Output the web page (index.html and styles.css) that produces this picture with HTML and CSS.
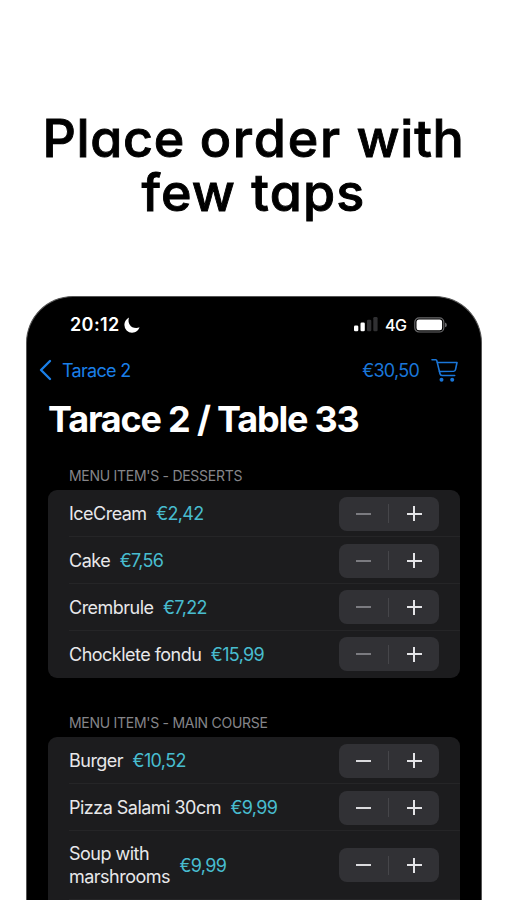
FILE: index.html
```html
<!DOCTYPE html>
<html lang="en">
<head>
<meta charset="utf-8">
<title>Place order with few taps</title>
<link rel="stylesheet" href="styles.css">
</head>
<body>
<h1 class="headline">Place <span class="wide">order</span> with<br><span class="second">few taps</span></h1>
<main class="phone">
  <div class="status">
    <span class="time">20:12</span>
    <svg class="moon" width="16" height="16" viewBox="0 0 16 16"><path d="M5 .4C3.400 1.300.4 3.700.4 8.100A7.600 7.600 0 0 0 8 15.700C12 15.700 14.700 13.300 15.500 10.300 14.600 10.800 13.300 11 12.200 11 6.500 11 3.200 5.800 5 .4Z" fill="#fff"/></svg>
    <svg class="signal" width="24" height="15" viewBox="0 0 24 15"><g fill="#fff"><rect x="0" y="8.500" width="4.300" height="5.800" rx="1.300"/><rect x="6.500" y="5.500" width="4.300" height="8.800" rx="1.300"/></g><g fill="#303032"><rect x="13" y="2.800" width="4.300" height="11.500" rx="1.300"/><rect x="19.300" y="0" width="4.300" height="14.300" rx="1.300"/></g></svg>
    <span class="network">4G</span>
    <svg class="battery" width="34" height="16" viewBox="0 0 34 16"><rect x=".8" y=".8" width="29" height="14.200" rx="4.300" fill="none" stroke="#69696b" stroke-width="1.200"/><rect x="2.500" y="2.500" width="25.600" height="10.800" rx="2.500" fill="#fff"/><path d="M31 5.500q1.900.8 1.900 2.400T31 10.300Z" fill="#69696b"/></svg>
  </div>
  <nav class="nav">
    <svg class="back" width="13" height="22" viewBox="0 0 13 22"><path d="M11 2 2 11l9 9" fill="none" stroke="#1a7fe8" stroke-width="2.400" stroke-linecap="round" stroke-linejoin="round"/></svg>
    <span class="back-label">Tarace 2</span>
    <span class="total">€30,50</span>
    <svg class="cart" width="28" height="25" viewBox="0 0 28 25"><g fill="none" stroke="#1a76d8" stroke-width="1.600" stroke-linecap="round" stroke-linejoin="round"><path d="M1 1.800h3.700q.9 0 1.100.9L9 15.800q.4 1.700 2 1.700h12.700"/><path d="M6.500 4.500H26l-1.500 7.200q-.3 1.500-1.800 1.600L8.500 13.500"/></g><circle cx="10.500" cy="21.800" r="2" fill="#1a76d8"/><circle cx="21.200" cy="21.800" r="2" fill="#1a76d8"/></svg>
  </nav>
  <h2 class="title">Tarace 2 / Table 33</h2>
  <section class="group">
    <h3 class="caption">MENU ITEM'S - DESSERTS</h3>
    <ul class="card">
      <li class="row"><span class="name">IceCream</span><span class="price">€2,42</span><span class="stepper"><i class="minus off"></i><i class="bar"></i><i class="plus"></i></span></li>
      <li class="row"><span class="name">Cake</span><span class="price">€7,56</span><span class="stepper"><i class="minus off"></i><i class="bar"></i><i class="plus"></i></span></li>
      <li class="row"><span class="name">Crembrule</span><span class="price">€7,22</span><span class="stepper"><i class="minus off"></i><i class="bar"></i><i class="plus"></i></span></li>
      <li class="row"><span class="name">Chocklete fondu</span><span class="price">€15,99</span><span class="stepper"><i class="minus off"></i><i class="bar"></i><i class="plus"></i></span></li>
    </ul>
  </section>
  <section class="group">
    <h3 class="caption">MENU ITEM'S - MAIN COURSE</h3>
    <ul class="card">
      <li class="row"><span class="name">Burger</span><span class="price">€10,52</span><span class="stepper"><i class="minus"></i><i class="bar"></i><i class="plus"></i></span></li>
      <li class="row"><span class="name">Pizza Salami 30cm</span><span class="price">€9,99</span><span class="stepper"><i class="minus"></i><i class="bar"></i><i class="plus"></i></span></li>
      <li class="row tall"><span class="name">Soup with<br>marshrooms</span><span class="price">€9,99</span><span class="stepper"><i class="minus"></i><i class="bar"></i><i class="plus"></i></span></li>
    </ul>
  </section>
</main>
</body>
</html>
```
FILE: styles.css
```css
* { box-sizing: border-box; }
body {
  margin: 0;
  height: 900px;
  overflow: hidden;
  background: #fff;
  font-family: Inter, "Liberation Sans", sans-serif;
  display: flex;
  flex-direction: column;
}
h1, h2, h3, ul { margin: 0; padding: 0; }
svg { display: block; flex: none; }
.headline {
  height: 296px;
  flex: none;
  padding-top: 112px;
  text-align: center;
  font-size: 52px;
  line-height: 54px;
  font-weight: 500;
  font-feature-settings: "cv11", "ss07";
  letter-spacing: 0.7px;
  -webkit-text-stroke: 0.9px #000;
  white-space: nowrap;
}
.wide { letter-spacing: 1.8px; }
.second { letter-spacing: 1.2px; }
.phone {
  width: 456px;
  height: 604px;
  flex: none;
  overflow: hidden;
  margin-left: 26px;
  padding: 0 21px;
  background: #000;
  border: 1px solid #555;
  border-bottom: 0;
  border-radius: 47px 47px 0 0;
}
.status {
  height: 54px;
  padding: 1px 12px 0 22px;
  display: flex;
  align-items: center;
  color: #fff;
}
.time { width: 54px; font-size: 18px; font-weight: 600; letter-spacing: 0.4px; }
.signal { margin-left: auto; }
.network { width: 29px; margin-left: 7px; font-size: 16px; font-weight: 500; letter-spacing: -0.4px; }
.nav {
  height: 38px;
  margin-left: -9px;
  display: flex;
  align-items: center;
  font-size: 18px;
  color: #1a7fe8;
}
.back-label { margin-left: 10px; letter-spacing: -0.7px; }
.total { margin-left: auto; letter-spacing: -0.75px; color: #1a76d8; }
.cart { margin: 0 1px 0 12px; }
.title {
  height: 61px;
  line-height: 61px;
  color: #fff;
  font-size: 36px;
  font-weight: 700;
  letter-spacing: -1.2px;
  white-space: nowrap;
}
.group { margin-bottom: 19.400px; }
.caption {
  height: 40.400px;
  padding: 17px 0 0 21px;
  font-size: 14px;
  line-height: 18px;
  font-weight: 400;
  letter-spacing: -0.28px;
  color: #858589;
}
.card {
  width: 412px;
  list-style: none;
  background: #1c1c1e;
  border-radius: 9px;
  overflow: hidden;
}
.group:last-child .card { border-radius: 9px 9px 0 0; }
.row {
  height: 46.8px;
  padding: 0 21px;
  display: flex;
  align-items: center;
  font-size: 18px;
  line-height: 23px;
  color: #e8e8ea;
  background: linear-gradient(#252527, #252527) 21px 100% / 391px 1px no-repeat;
}
.group:first-of-type .row:last-child { background: none; }
.tall { height: 69px; }
.name { letter-spacing: -0.52px; }
.price { margin-left: 9.5px; letter-spacing: -0.65px; color: #48bccf; }
.stepper {
  width: 100px;
  height: 34px;
  margin-left: auto;
  display: grid;
  grid-template-columns: 49px 1px 50px;
  place-items: center;
  border-radius: 8px;
  background: #313135;
}
.bar { width: 1px; height: 19px; background: #46464a; }
.minus { width: 15px; height: 2px; background: #dadadd; }
.off { background: #7b7b80; }
.plus {
  width: 15px;
  height: 15px;
  background: linear-gradient(#e4e4e7, #e4e4e7) center / 15px 2px no-repeat, linear-gradient(#e4e4e7, #e4e4e7) center / 2px 15px no-repeat;
}
```
